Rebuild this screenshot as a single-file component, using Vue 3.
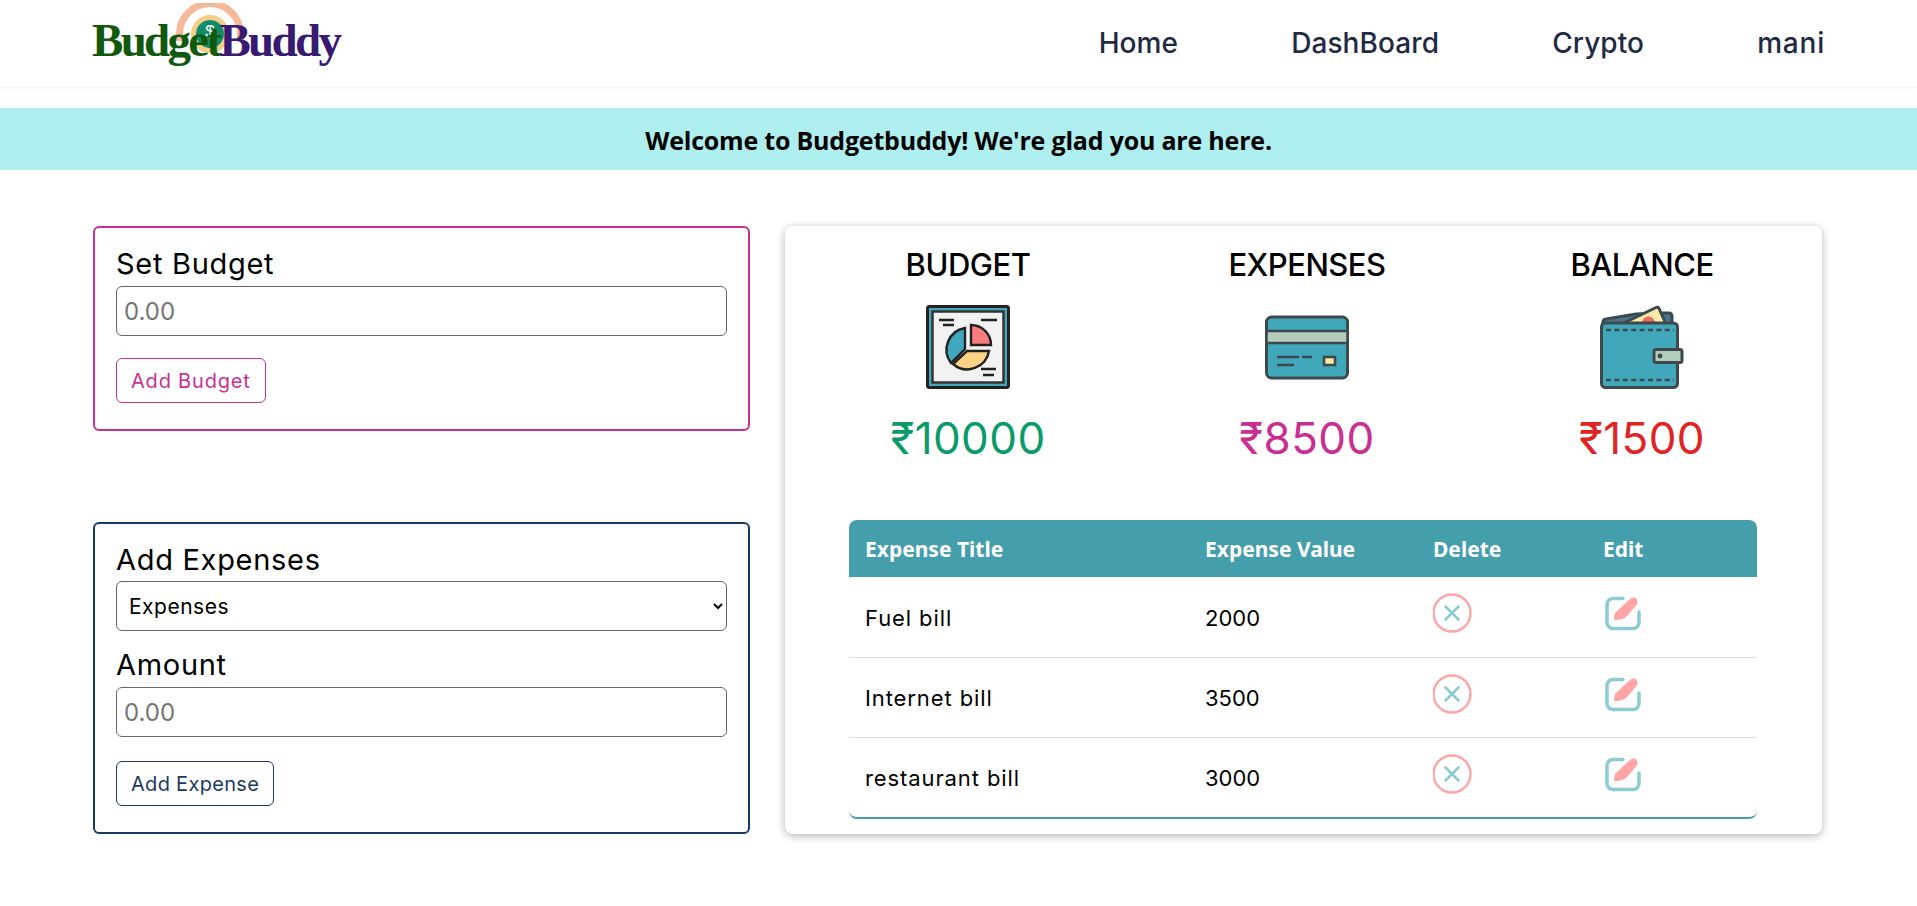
<script setup>
const rows = [
  { title: 'Fuel bill', value: 2000 },
  { title: 'Internet bill', value: 3500 },
  { title: 'restaurant bill', value: 3000 },
]
</script>

<template>
  <div class="page">
    <header class="navbar">
      <div class="logo">
        <svg class="logo-mark" width="70" height="54" viewBox="0 0 70 54">
          <path d="M4.5 38V31a30 30 0 0 1 61 0v7" fill="none" stroke="#f5b899" stroke-width="7" />
          <circle cx="35" cy="31" r="16.5" fill="none" stroke="#f3cf85" stroke-width="5" />
          <circle cx="35" cy="31" r="14" fill="#138a69" />
          <text x="35" y="34" class="logo-dollar">$</text>
        </svg>
        <span class="logo-text"><span class="logo-green">Budget</span><span class="logo-purple">Buddy</span></span>
      </div>
      <nav class="nav-links">
        <a>Home</a>
        <a>DashBoard</a>
        <a>Crypto</a>
        <a>mani</a>
      </nav>
    </header>

    <div class="banner">Welcome to Budgetbuddy! We're glad you are here.</div>

    <main class="content">
      <section class="forms">
        <form class="form-box budget-box" @submit.prevent>
          <label>Set Budget</label>
          <input type="text" placeholder="0.00" />
          <button class="budget-btn">Add Budget</button>
        </form>
        <form class="form-box expense-box" @submit.prevent>
          <label>Add Expenses</label>
          <select>
            <option>Expenses</option>
          </select>
          <label>Amount</label>
          <input type="text" placeholder="0.00" />
          <button class="expense-btn">Add Expense</button>
        </form>
      </section>

      <section class="summary-card">
        <div class="stats">
          <div class="stat">
            <h3>BUDGET</h3>
            <svg width="84" height="84" viewBox="0 0 84 84">
              <rect x="1.5" y="1.5" width="81" height="81" rx="2" fill="#41a8bb" stroke="#222" stroke-width="3" />
              <rect x="6.5" y="6.5" width="71" height="71" fill="#f2f2f2" stroke="#333" stroke-width="2.5" />
              <path d="M13 15h15M17 20h11M55 15h16M55 64h15M57 70h11" stroke="#222" stroke-width="2.4" fill="none" />
              <path d="M39 23V44L25 58A22 22 0 0 1 39 23z" fill="#41a8bb" stroke="#222" stroke-width="2.4" />
              <path d="M45 20A20 20 0 0 1 65 40H45z" fill="#f87d7e" stroke="#222" stroke-width="2.4" />
              <path d="M41 46H63A22 22 0 0 1 27 59z" fill="#fdd287" stroke="#222" stroke-width="2.4" />
            </svg>
            <p class="amount green">₹10000</p>
          </div>
          <div class="stat stat-middle">
            <h3>EXPENSES</h3>
            <svg width="84" height="84" viewBox="0 0 84 84">
              <rect x="1.5" y="12" width="81" height="61" rx="5" fill="#41a8bb" stroke="#3c4a4e" stroke-width="3" />
              <rect x="1.5" y="26" width="81" height="12" fill="#b3cdba" stroke="#3c4a4e" stroke-width="2.5" />
              <path d="M13 52h20M38 52h8M13 60h15" stroke="#3c4a4e" stroke-width="2.6" stroke-linecap="round" />
              <rect x="59" y="52" width="11" height="8" fill="#fdeaa8" stroke="#3c4a4e" stroke-width="2.6" />
            </svg>
            <p class="amount pink">₹8500</p>
          </div>
          <div class="stat">
            <h3>BALANCE</h3>
            <svg width="84" height="84" viewBox="0 0 84 84">
              <path d="M3 20v-3a3 3 0 0 1 3-3l30-5 27-1h6a3 3 0 0 1 3 3v9z" fill="#4a7590" stroke="#3c4a4e" stroke-width="3" />
              <path d="M22 19L56 2.5a2 2 0 0 1 3 1L66 19z" fill="#fdeaa8" stroke="#3c4a4e" stroke-width="3" />
              <path d="M42 18a6.5 6.5 0 0 1 13 0z" fill="#ef6a5b" />
              <rect x="1.5" y="18" width="76" height="64.5" rx="4" fill="#41a8bb" stroke="#3c4a4e" stroke-width="3" />
              <path d="M6 25h68M6 75h68" stroke="#3c4a4e" stroke-width="2.6" stroke-dasharray="5 3.4" />
              <rect x="54" y="44.5" width="28" height="13" rx="2" fill="#b3cdba" stroke="#3c4a4e" stroke-width="3" />
              <circle cx="60" cy="51" r="2.4" fill="#3c4a4e" />
            </svg>
            <p class="amount red">₹1500</p>
          </div>
        </div>

        <div class="table-wrap">
          <table class="expense-table">
            <thead>
              <tr>
                <th class="col-title">Expense Title</th>
                <th class="col-value">Expense Value</th>
                <th class="col-delete">Delete</th>
                <th>Edit</th>
              </tr>
            </thead>
            <tbody>
              <tr v-for="row in rows" :key="row.title">
                <td class="title-cell">{{ row.title }}</td>
                <td>{{ row.value }}</td>
                <td class="icon-cell">
                  <svg class="row-icon" width="40" height="40" viewBox="0 0 40 40">
                    <circle cx="19" cy="20" r="18.5" fill="none" stroke="#ffa5a5" stroke-width="2.4" />
                    <path d="M12.500 13.500l13 13M25.500 13.500l-13 13" stroke="#8ccbd3" stroke-width="2.6" stroke-linecap="round" />
                  </svg>
                </td>
                <td class="icon-cell">
                  <svg class="row-icon" width="40" height="40" viewBox="0 0 40 40">
                    <path d="M20 5.500H10a6 6 0 0 0-6 6v18a6 6 0 0 0 6 6h20a6 6 0 0 0 6-6V19" fill="none" stroke="#8ccbd3" stroke-width="3.5" stroke-linecap="round" />
                    <path d="M11 27C11 23 11.500 21 13 19L27 6C29 4 32 4 33.500 6C35 8 35 10 33.500 12L24 23C21 26 17 27 11 27z" fill="#ffa5a5" />
                  </svg>
                </td>
              </tr>
            </tbody>
          </table>
        </div>
      </section>
    </main>
  </div>
</template>

<style scoped>
.page {
  font-family: Inter, "Noto Sans", sans-serif;
  color: #000;
  background: #fff;
  height: 906px;
  overflow: hidden;
}
.navbar {
  height: 87px;
  box-sizing: border-box;
  display: flex;
  align-items: center;
  justify-content: space-between;
  padding: 0 92px;
  border-bottom: 1px solid #f5f6f8;
  box-shadow: 0 2px 4px rgba(0, 0, 0, 0.03);
}
.logo {
  position: relative;
  height: 87px;
  display: flex;
  align-items: center;
}
.logo-mark {
  position: absolute;
  left: 83px;
  top: 3px;
}
.logo-dollar {
  font-family: "Liberation Sans", sans-serif;
  font-size: 17px;
  fill: #fff;
  text-anchor: middle;
}
.logo-text {
  position: relative;
  font-family: "Liberation Serif", serif;
  font-weight: 700;
  font-size: 47px;
  letter-spacing: -2.7px;
  line-height: 1;
  margin-top: -6px;
}
.logo-green { color: #10590d; }
.logo-purple { color: #381a70; }
.nav-links {
  display: flex;
  gap: 113px;
}
.nav-links a {
  font-size: 28px;
  font-weight: 500;
  color: #1f2a44;
  letter-spacing: 0.1px;
}
.nav-links a:last-child { letter-spacing: 0.8px; }
.banner {
  margin-top: 21px;
  height: 62px;
  box-sizing: border-box;
  padding-top: 2px;
  display: flex;
  align-items: center;
  justify-content: center;
  background: #aeeeee;
  font-family: "Open Sans", sans-serif;
  font-weight: 700;
  font-size: 25px;
  letter-spacing: -0.2px;
}
.content {
  display: flex;
  gap: 35px;
  padding: 56px 0 0 93px;
}
.forms {
  width: 657px;
  display: flex;
  flex-direction: column;
  gap: 91px;
}
.form-box {
  box-sizing: border-box;
  border: 2px solid;
  border-radius: 6px;
  padding: 17px 21px 26px;
  display: flex;
  flex-direction: column;
  align-items: flex-start;
}
.budget-box { border-color: #c92f92; height: 205px; }
.expense-box { border-color: #1b3a63; height: 312px; }
.form-box label {
  font-size: 29px;
  letter-spacing: 0.7px;
  line-height: 38px;
  margin-bottom: 3px;
}
.form-box input,
.form-box select {
  box-sizing: border-box;
  width: 100%;
  height: 50px;
  border: 1px solid #666;
  border-radius: 6px;
  background: #fff;
  padding: 0 7px;
  font-family: inherit;
  font-size: 24px;
  flex-shrink: 0;
}
.form-box input::placeholder { color: #757575; }
.form-box select {
  font-size: 21px;
  letter-spacing: 0.5px;
  margin: -1px 0 15px;
  padding: 0 8px;
}
.form-box button {
  background: #fff;
  border: 1px solid;
  border-radius: 6px;
  height: 46px;
  padding: 0 14px;
  font-family: inherit;
  font-size: 20px;
  margin-top: 22px;
}
.budget-btn { color: #c92f92; border-color: #c92f92; letter-spacing: 0.8px; }
.form-box .expense-btn { color: #1b3a63; border-color: #1b3a63; letter-spacing: 0.3px; margin-top: 24px; }
.summary-card {
  box-sizing: border-box;
  width: 1037px;
  height: 608px;
  background: #fff;
  border-radius: 8px;
  box-shadow: 0 2px 8px rgba(0, 0, 0, 0.3);
  padding: 18px 64px 0;
}
.stats {
  display: flex;
  justify-content: space-between;
  margin: 0 16px 0 19px;
}
.stat {
  width: 200px;
  text-align: center;
  display: flex;
  flex-direction: column;
  align-items: center;
}
.stat-middle { margin-left: 4px; }
.stat h3 {
  margin: -1px 0 18px;
  font-size: 31px;
  font-weight: 500;
  letter-spacing: -0.5px;
  line-height: 44px;
}
.amount {
  margin: 21px 0 0;
  font-size: 44px;
  letter-spacing: 0.4px;
  line-height: 56px;
  font-weight: 400;
  white-space: nowrap;
}
.green { color: #0b9a6b; }
.pink { color: #c92f92; }
.red { color: #e02424; }
.table-wrap {
  width: 908px;
  margin-top: 54px;
  border-bottom: 2px solid #449eab;
  border-radius: 8px;
}
.expense-table {
  width: 908px;
  border-collapse: collapse;
  table-layout: fixed;
}
.expense-table th {
  box-sizing: border-box;
  background: #449eab;
  color: #fff;
  height: 57px;
  text-align: left;
  padding: 0 16px;
  font-family: "Noto Sans", sans-serif;
  font-size: 21px;
  font-weight: 700;
}
.expense-table th:first-child { border-top-left-radius: 8px; }
.expense-table th:last-child { border-top-right-radius: 8px; }
.col-title { width: 340px; }
.col-value { width: 228px; }
.col-delete { width: 170px; }
.expense-table td {
  height: 80px;
  padding: 2px 16px 0;
  font-size: 22px;
  border-top: 1px solid #ddd;
  box-sizing: border-box;
}
.expense-table .icon-cell { padding-top: 0; }
.expense-table tbody tr:first-child td { border-top: 0; }
.expense-table .title-cell { letter-spacing: 0.9px; }
.row-icon {
  display: block;
  margin-top: -7px;
}
</style>

<style>
body { background: #fff; }
</style>
